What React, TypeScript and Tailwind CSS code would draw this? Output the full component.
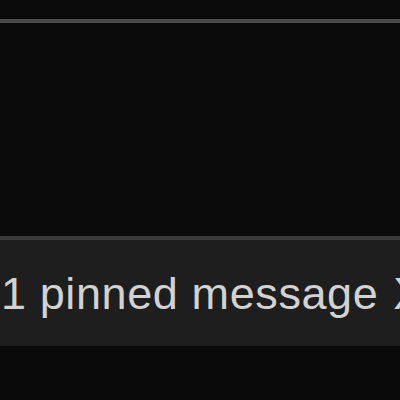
import React from 'react';

const App = () => {
  return (
    <div className="w-[400px] h-[400px] overflow-hidden bg-[#0b0b0b] flex flex-col" style={{ fontFamily: '"Liberation Sans", Arial, sans-serif' }}>
      <div className="h-[19px] shrink-0" />
      <div className="h-[4px] shrink-0 bg-[#4a4a4a]" />
      <div className="h-[213px] shrink-0" />
      <div className="h-[4px] shrink-0 bg-[#3b3b3b]" />
      <div className="h-[106px] shrink-0 bg-[#1e1e1e] flex items-center whitespace-nowrap text-[#d2d2d2] text-[45px] leading-none tracking-[0.6px] overflow-hidden">
        <span className="ml-[1px]">1 pinned message</span>
        <span className="ml-[15px] shrink-0">X</span>
      </div>
      <div className="flex-1 bg-[#0a0a0a]" />
    </div>
  );
};

export default App;
